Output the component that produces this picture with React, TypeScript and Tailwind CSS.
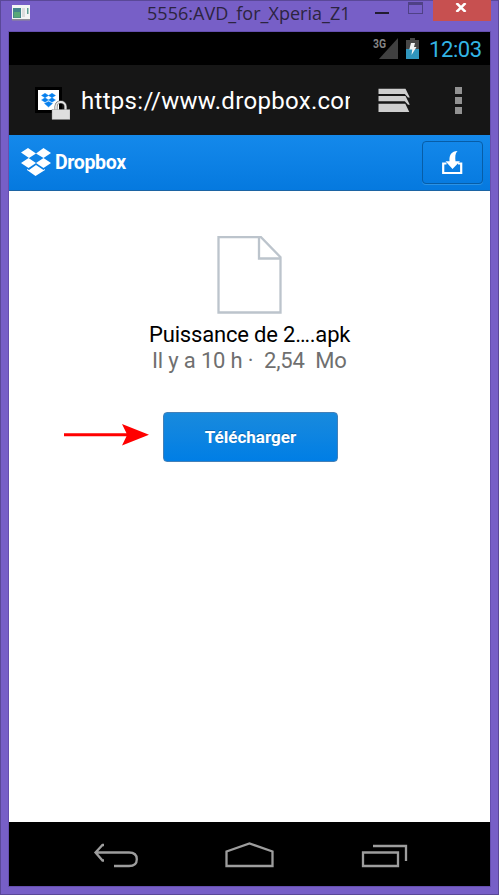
import React from "react";

function TitleBar() {
  return (
    <header className="flex h-8 shrink-0 items-start pl-3 pr-2">
      <svg className="mt-[5px] h-4 w-[18px]" viewBox="12 5 18 16">
        <rect x="12" y="5" width="18" height="15" fill="#f4f4f4" />
        <rect x="12" y="19" width="18" height="1.5" fill="#8d8b96" />
        <rect x="13" y="8" width="8" height="10" fill="#43858b" />
        <rect x="14" y="12" width="6" height="5.5" fill="#58a877" />
        <rect x="22" y="8" width="3" height="9" fill="#dcdcdc" />
        <rect x="27" y="8" width="1.5" height="6" fill="#5c9d91" />
      </svg>
      <h1 className="ml-[117px] w-[210px] whitespace-nowrap font-['Open_Sans',sans-serif] text-[18px] leading-[27px] tracking-[0.03px] text-[#2c2440]">
        5556:AVD_for_Xperia_Z1
      </h1>
      <div className="ml-[18px] mt-3 h-[2px] w-3.5 bg-[#221c31]" />
      <div className="ml-[19px] mt-[2px] h-3 w-[15px] border border-t-[3px] border-[#4f4186]" />
      <button className="ml-auto flex h-[21px] w-[58px] items-start justify-center bg-[#c75050] pr-[2px]">
        <svg className="mt-[3px] h-[9px] w-3" viewBox="0 0 12 9">
          <path d="M1.500 0 10.500 9M10.500 0 1.500 9" stroke="#fff" strokeWidth="2.500" />
        </svg>
      </button>
    </header>
  );
}

function StatusBar() {
  return (
    <div className="flex h-[33px] shrink-0 justify-end bg-black pr-[9px]">
      <svg className="h-[33px] w-12" viewBox="372 32 48 33">
        <text x="373" y="47.500" fill="#858585" fontSize="12" fontWeight="700" fontFamily="Roboto, sans-serif" textLength="13" lengthAdjust="spacingAndGlyphs">3G</text>
        <path d="M398 38V59H379Z" fill="#404040" />
        <path d="M410 38h5v2h4v11h-13V40h4z" fill="#474747" />
        <rect x="406" y="49" width="13" height="10" fill="#3095bc" />
        <path d="M411 43h4l-1 4h2.500l-5 8 .8-5.500h-3z" fill="#f3f5f5" />
      </svg>
      <time className="ml-[9px] w-[52px] whitespace-nowrap font-[Roboto,sans-serif] text-[22px] leading-[35px] tracking-[-0.4px] text-[#33b5e5]">12:03</time>
    </div>
  );
}

function BrowserBar() {
  return (
    <div className="flex h-[70px] shrink-0 items-center bg-[#161616]">
      <svg className="ml-[25px] mt-1 h-9 w-9" viewBox="34 84 36 36">
        <rect x="35" y="87" width="27" height="26" fill="#000" />
        <rect x="38" y="90" width="21" height="20" fill="#fff" />
        <path d="m41.500 95.500 3.500-2.200 3.500 2.200-3.500 2.200zM48.500 95.500l3.500-2.200 3.500 2.200-3.500 2.200zM41.500 100l3.500-2.300 3.500 2.300-3.500 2.200zM48.500 100l3.500-2.300 3.500 2.300-3.500 2.200zM44.500 103.500l4-2 4 2-4 3.500z" fill="#0780ee" stroke="#0780ee" strokeWidth=".4" />
        <path d="M56 110v-3.500c0-6 9.500-6 9.500 0v3.500" fill="none" stroke="#666" strokeWidth="3" />
        <path d="M56 110v-3.500c0-6 9.500-6 9.500 0v3.500" fill="none" stroke="#e6e6e6" strokeWidth="1.800" />
        <rect x="52" y="109.500" width="18" height="10" fill="#dfdfdf" stroke="#858585" strokeWidth=".4" />
      </svg>
      <div className="ml-[11px] mt-[2px] w-[269px] overflow-hidden whitespace-nowrap font-[Roboto,sans-serif] text-[24px] leading-8 tracking-[0.3px] text-white">https://www.dropbox.com</div>
      <svg className="ml-7 h-6 w-8" viewBox="378 88 32 24">
        <path d="M378.500 88.700h27l4.300 8.800h-1.800l-3.200-3.500h-26.300zM378.500 96h27l4.300 8.800h-1.800l-3.200-3.500h-26.300zM378.500 103.700h26.800l4 8.300h-30.800z" fill="#cecece" />
      </svg>
      <div className="ml-[45px] flex flex-col gap-[3px]">
        <i className="h-[7px] w-[7px] bg-[#929292]" />
        <i className="h-[7px] w-[7px] bg-[#929292]" />
        <i className="h-[7px] w-[7px] bg-[#929292]" />
      </div>
    </div>
  );
}

function DropboxHeader() {
  return (
    <div className="flex h-14 shrink-0 items-start border-b border-[#1c64a3] bg-linear-to-b from-[#1489eb] to-[#0579df]">
      <svg className="ml-[11px] mt-3 h-[30px] w-8" viewBox="20 147 32 30">
        <g fill="#fff">
          <path d="m28 148 8 5.500-7 4.500-8-5.500zM43.500 148l7.500 5-7.500 5-7.500-4.500zM28.500 158l7.500 5-7.500 5-7.500-5zM43.500 158l7.500 5-7.500 5-7.500-5z" />
          <path d="m27 169 2 1 7-5 7.500 5 1.500-1v1l-9.500 6-8.500-6z" />
        </g>
      </svg>
      <div className="ml-[3px] mt-3 w-[72px] font-[Roboto,sans-serif]">
        <span className="block origin-left scale-x-[0.93] whitespace-nowrap text-[21px] font-bold leading-[31px] tracking-[-0.4px] text-white">Dropbox</span>
      </div>
      <button className="ml-auto mr-[7px] mt-[6px] flex h-[43px] w-[61px] items-center justify-center rounded-[4px] border border-[#075da7] shadow-[0_1px_0_#2b92e5]">
        <svg className="mb-[2px] mr-[2px] h-[26px] w-6" viewBox="440 149 24 26">
          <path d="M457.500 151c-2.500 2.500-2.500 6-2 10.200h4.500l-7.500 7.800-7-7.800h4c-.5-6 2-10.200 8-10.200z" fill="#fff" />
          <path d="M446.500 163.500h-3.300V173h18v-9.500H458" fill="none" stroke="#fff" strokeWidth="2.200" />
        </svg>
      </button>
    </div>
  );
}

function DownloadPage() {
  return (
    <main className="flex min-h-0 flex-1 flex-col bg-white font-[Roboto,sans-serif]">
      <svg className="ml-[207px] mt-[44px] h-[80px] w-[68px] shrink-0" viewBox="216 235 68 80">
        <path d="M218.500 237.200H261l19.500 20V312.500H218.500zM259 237v21.500h21.500" fill="none" stroke="#bcc4cc" strokeWidth="2.300" />
      </svg>
      <h2 className="ml-[140px] mt-[7px] whitespace-nowrap text-[22px] leading-[26px] tracking-[-0.18px] text-black">Puissance de 2….apk</h2>
      <p className="ml-[143px] whitespace-pre text-[22px] leading-[25px] tracking-[-0.17px] text-[#6f6f6f]">Il y a 10 h ·  2,54  Mo</p>
      <div className="mt-[39px] flex items-start pl-[55px]">
        <svg className="mt-3 h-6 w-[86px]" viewBox="64 424 86 24">
          <path d="M64 433.200h62.500L122 424l27 10.700-27 10.800 4.500-9.300H64z" fill="#f00" />
        </svg>
        <button className="ml-[13px] h-[50px] w-[175px] rounded-[4px] border border-[#4380b8] bg-linear-to-b from-[#188add] to-[#007ee5] text-[17px] font-bold leading-[48px] text-white [text-shadow:0_-1px_0_#0b62ab]">Télécharger</button>
      </div>
    </main>
  );
}

function NavigationBar() {
  return (
    <nav className="flex h-16 shrink-0 items-center bg-black">
      <svg className="ml-[83px] h-7 w-[50px]" viewBox="92 840 50 28" fill="none" stroke="#9d9d9d" strokeWidth="2.300">
        <path d="M104 845h-1.500l-7 7.500 7 8h1.500M96 852.500h33c5 0 7.800 2.200 7.800 6.700s-2.800 6.800-7.800 6.800H114" />
      </svg>
      <svg className="ml-[81px] h-7 w-[54px]" viewBox="223 840 54 28" fill="none" stroke="#9d9d9d" strokeWidth="2.300">
        <path d="M226.500 866v-14.500l23-8 23 8V866z" />
      </svg>
      <svg className="ml-[83px] h-7 w-[50px]" viewBox="360 840 50 28" fill="none" stroke="#9d9d9d" strokeWidth="2.300">
        <path d="M363 852.500h35V866h-35zM373 846h33v15" />
      </svg>
    </nav>
  );
}

export default function App() {
  return (
    <div className="flex h-[895px] w-[499px] flex-col overflow-hidden bg-[#775fc7] shadow-[inset_0_0_0_1px_#5a4898]">
      <TitleBar />
      <div className="mx-[9px] flex h-[854px] w-[481px] flex-col shadow-[0_0_0_1px_#654faf]">
        <StatusBar />
        <BrowserBar />
        <DropboxHeader />
        <DownloadPage />
        <NavigationBar />
      </div>
    </div>
  );
}
